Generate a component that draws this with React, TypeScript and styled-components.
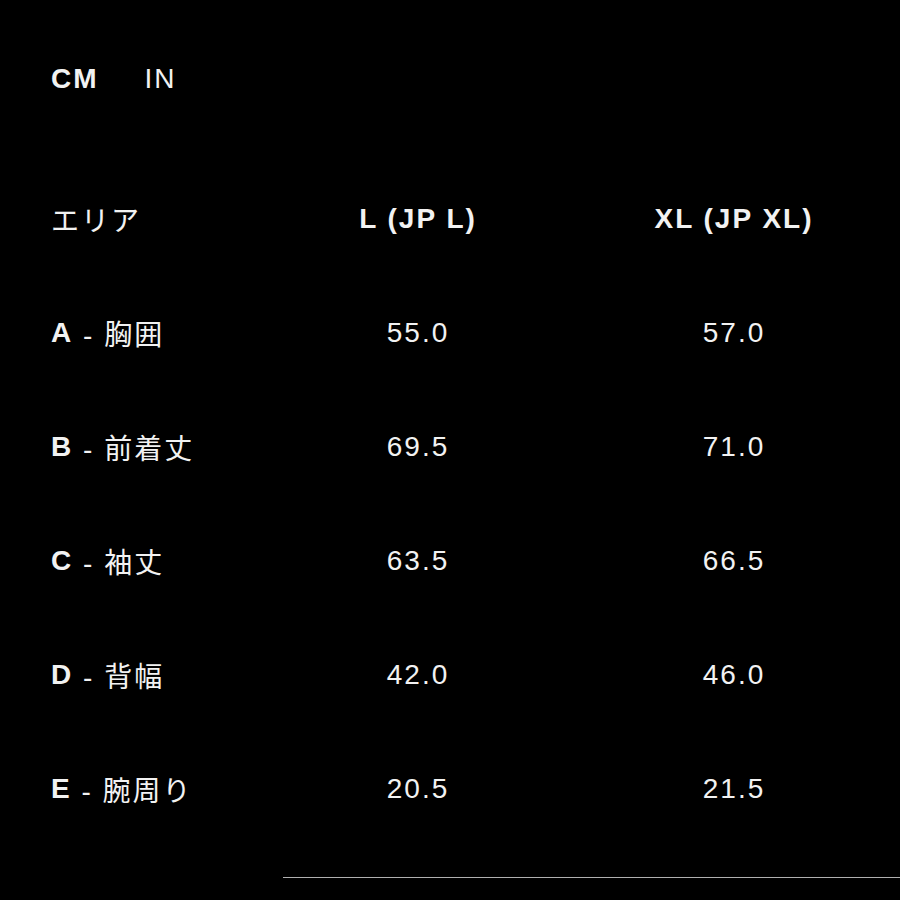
import React from 'react';
import styled, { createGlobalStyle } from 'styled-components';

const GlobalStyle = createGlobalStyle`
  html, body {
    margin: 0;
    padding: 0;
    background-color: #000;
  }
`;

const Page = styled.div`
  width: 900px;
  height: 900px;
  background-color: #000;
  color: #f2f2f2;
  font-family: "Liberation Sans", "Noto Sans CJK JP", sans-serif;
  font-size: 28px;
  letter-spacing: 2px;
  display: flex;
  flex-direction: column;
  overflow: hidden;
`;

const UnitToggle = styled.div`
  display: flex;
  align-items: center;
  gap: 46px;
  height: 40px;
  margin-top: 59px;
  padding-left: 51px;
`;

const UnitButton = styled.span<{ active?: boolean }>`
  font-weight: ${props => (props.active ? 700 : 400)};
  line-height: 40px;
`;

const Table = styled.div`
  display: grid;
  grid-template-columns: 209px 316px 316px;
  grid-auto-rows: 114px;
  margin-top: 63px;
  padding-left: 51px;
`;

const Cell = styled.div<{ center?: boolean; bold?: boolean }>`
  display: flex;
  align-items: center;
  justify-content: ${props => (props.center ? 'center' : 'flex-start')};
  font-weight: ${props => (props.bold ? 700 : 400)};
  white-space: nowrap;
`;

const Letter = styled.span`
  font-weight: 700;
`;

const Divider = styled.div`
  height: 1px;
  background-color: #b0b0b0;
  margin-top: 31px;
  margin-left: 283px;
`;

type Row = { letter: string; name: string; l: string; xl: string };

const rows: Row[] = [
  { letter: 'A', name: '胸囲', l: '55.0', xl: '57.0' },
  { letter: 'B', name: '前着丈', l: '69.5', xl: '71.0' },
  { letter: 'C', name: '袖丈', l: '63.5', xl: '66.5' },
  { letter: 'D', name: '背幅', l: '42.0', xl: '46.0' },
  { letter: 'E', name: '腕周り', l: '20.5', xl: '21.5' },
];

const App: React.FC = () => {
  return (
    <>
      <GlobalStyle />
      <Page>
        <UnitToggle>
          <UnitButton active>CM</UnitButton>
          <UnitButton>IN</UnitButton>
        </UnitToggle>

        <Table>
          <Cell>エリア</Cell>
          <Cell center bold>L (JP L)</Cell>
          <Cell center bold>XL (JP XL)</Cell>

          {rows.map(row => (
            <React.Fragment key={row.letter}>
              <Cell>
                <Letter>{row.letter}</Letter>&nbsp;-&nbsp;{row.name}
              </Cell>
              <Cell center>{row.l}</Cell>
              <Cell center>{row.xl}</Cell>
            </React.Fragment>
          ))}
        </Table>

        <Divider />
      </Page>
    </>
  );
};

export default App;
